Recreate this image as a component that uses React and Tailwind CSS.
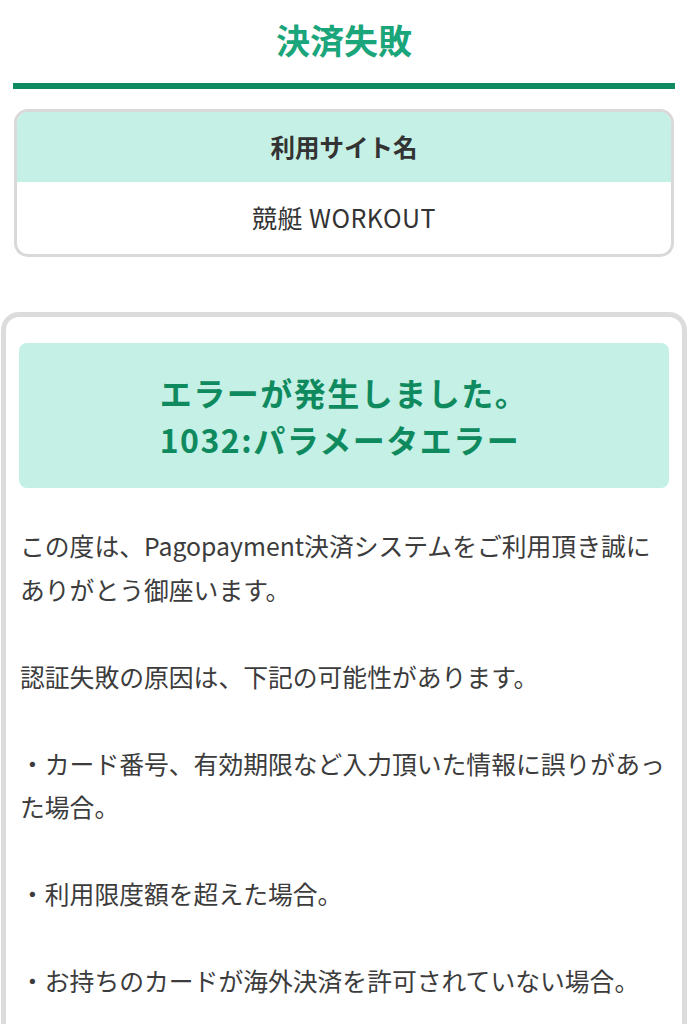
export default function App() {
  const reasons = [
    "・カード番号、有効期限など入力頂いた情報に誤りがあった場合。",
    "・利用限度額を超えた場合。",
    "・お持ちのカードが海外決済を許可されていない場合。",
  ];

  return (
    <div
      className="min-h-screen bg-white text-[#3c3c3c]"
      style={{ fontFamily: '"Noto Sans CJK JP", "Noto Sans", sans-serif' }}
    >
      {/* Title */}
      <div className="mx-[13px] h-[89px] border-b-[6px] border-[#0e8a62] flex items-center justify-center">
        <h1 className="text-[34px] font-bold text-[#1aa57a] leading-none pb-[4px]">決済失敗</h1>
      </div>

      {/* Site name */}
      <div className="mx-[14px] mt-[20px] border-[3px] border-[#d9d9d9] rounded-[14px] overflow-hidden">
        <div className="h-[70px] bg-[#c4f0e5] flex items-center justify-center">
          <p className="text-[24.5px] font-bold text-[#333]">利用サイト名</p>
        </div>
        <div className="h-[72px] flex items-center justify-center">
          <p className="text-[25px] text-[#333] tracking-[0.5px]">競艇 WORKOUT</p>
        </div>
      </div>

      {/* Error card */}
      <div className="mx-[1px] mt-[55px] border-[5px] border-b-0 border-[#dcdcdc] rounded-t-[18px] pt-[26px] px-[13px] pb-[40px]">
        <div className="h-[145px] bg-[#c4f0e5] rounded-[8px] flex items-center justify-center">
          <div className="text-left text-[32px] font-bold leading-[47px] tracking-[1.5px] text-[#0f8a5f]">
            <p>エラーが発生しました。</p>
            <p>1032:パラメータエラー</p>
          </div>
        </div>

        <div className="mt-[36px] text-[24.8px] leading-[43.5px] text-[#3c3c3c] pl-[1px]">
          <p>この度は、Pagopayment決済システムをご利用頂き誠にありがとう御座います。</p>
          <p className="mt-[43.5px]">認証失敗の原因は、下記の可能性があります。</p>
          {reasons.map(r => (
            <p key={r} className="mt-[43.5px]">{r}</p>
          ))}
        </div>
      </div>
    </div>
  );
}
